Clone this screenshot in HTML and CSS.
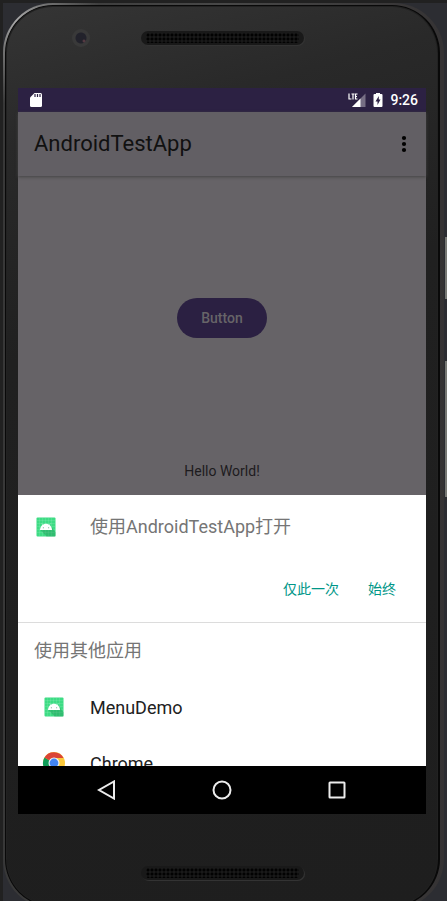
FILE: index.html
```html
<!DOCTYPE html>
<html lang="zh-CN">
<head>
<meta charset="utf-8">
<meta name="viewport" content="width=device-width">
<title>AndroidTestApp</title>
<link rel="stylesheet" href="styles.css">
</head>
<body>
<svg class="defs" width="0" height="0" aria-hidden="true">
  <symbol id="android" viewBox="0 0 20 20">
    <rect x="0.5" y="0.5" width="19" height="19" rx="1" fill="#3ddc84"/>
    <path d="M3.500 1v18M6.500 1v18M9.500 1v18M12.500 1v18M15.500 1v18M1 3.500h18M1 6.500h18M1 9.500h18M1 12.500h18M1 15.500h18" stroke="#fff" stroke-opacity=".18" stroke-width=".6"/>
    <path d="M4 12.500L10.500 19.500H19.500V15.500L14.500 8.500Z" fill="#1d8f52" fill-opacity=".4"/>
    <path d="M4 13C4.300 9 7 6.800 10 6.800S15.700 9 16 13Z" fill="#fff"/>
    <path d="M7 8.500L5.800 6.500M13 8.500L14.200 6.500" stroke="#fff" stroke-opacity=".7" stroke-width=".6"/>
    <circle cx="7.300" cy="10.700" r=".5" fill="#5b9477"/><circle cx="12.700" cy="10.700" r=".5" fill="#5b9477"/>
  </symbol>
</svg>
<div class="phone">
  <div class="body">
    <div class="forehead">
      <span class="camera"></span>
      <span class="speaker"></span>
    </div>
    <div class="screen">
      <div class="status">
        <svg width="14" height="16" viewBox="0 0 14 16"><path d="M5.500 1H11.500Q13 1 13 2.500V13.500Q13 15 11.500 15H2.500Q1 15 1 13.500V5.500Z" fill="#fff"/><path d="M6 2v3M8.500 2v3M11 2v3" stroke="#2c2143" stroke-width="1.200"/></svg>
        <span class="signals">
          <svg width="18" height="16" viewBox="0 0 18 16"><path d="M4 15L17.500 1.500V15Z" fill="#766e84"/><path d="M4 15L12.500 6.500V15Z" fill="#fff"/><path d="M1 1.500V7H3.500M3.500 2H6.500M5 2V7.500M9.500 2H7.500V7H9.500M7.500 4.500H9" fill="none" stroke="#fff" stroke-width="1.200"/></svg>
          <svg width="10" height="16" viewBox="0 0 10 16"><path d="M3 1H7V2H8.500Q9.500 2 9.500 3V14Q9.500 15 8.500 15H1.500Q.5 15 .5 14V3Q.5 2 1.500 2H3Z" fill="#fff"/><path d="M5.800 4L2.500 9.500H4.500V13L7.500 7.500H5.800Z" fill="#2c2143"/></svg>
          <span class="clock">9:26</span>
        </span>
      </div>
      <header class="appbar">
        <h1>AndroidTestApp</h1>
        <button class="more" aria-label="More options"><svg width="6" height="18" viewBox="0 0 6 18"><circle cx="3" cy="3" r="2.100"/><circle cx="3" cy="9" r="2.100"/><circle cx="3" cy="15" r="2.100"/></svg></button>
      </header>
      <main class="page">
        <button class="pill">Button</button>
        <p class="hello">Hello World!</p>
      </main>
      <section class="sheet">
        <div class="choice">
          <svg class="app" width="20" height="20"><use href="#android"/></svg>
          <h2>使用AndroidTestApp打开</h2>
        </div>
        <div class="actions">
          <button>仅此一次</button>
          <button>始终</button>
        </div>
        <div class="others">
          <h2>使用其他应用</h2>
          <button class="row"><span class="slot"><svg width="20" height="20"><use href="#android"/></svg></span>MenuDemo</button>
          <button class="row"><span class="slot"><svg width="24" height="24" viewBox="0 0 24 24"><circle cx="12" cy="12" r="11" fill="#fbc93b"/><path d="M12 12L2.470 6.500A11 11 0 0 0 12 23L17 14.500Z" fill="#0f9d58"/><path d="M12 12L2.470 6.500A11 11 0 0 1 21.530 7H12L7.500 14.500Z" fill="#db4437"/><circle cx="12" cy="12" r="5.500" fill="#f1f1f1"/><circle cx="12" cy="12" r="4.400" fill="#4285f4"/></svg></span>Chrome</button>
        </div>
      </section>
      <nav class="nav">
        <button aria-label="Back"><svg width="20" height="20" viewBox="0 0 20 20"><path d="M17 1.500V18.500L2 10Z"/></svg></button>
        <button aria-label="Home"><svg width="20" height="20" viewBox="0 0 20 20"><circle cx="10" cy="10" r="8.500"/></svg></button>
        <button aria-label="Overview"><svg width="20" height="20" viewBox="0 0 20 20"><rect x="2.500" y="2.500" width="15" height="15" rx=".5"/></svg></button>
      </nav>
    </div>
    <div class="chin"><span class="speaker"></span></div>
  </div>
</div>
<span class="side power"></span>
<span class="side volume"></span>
</body>
</html>
```
FILE: styles.css
```css
* { box-sizing: border-box; }
html, body { height: 100%; }
body {
  margin: 0;
  padding: 3px 3px 0;
  overflow: hidden;
  position: relative;
  background: linear-gradient(#212121 3px, transparent 3px), linear-gradient(90deg, #212121 3px, #2c2d32 3px);
  font-family: Roboto, "Noto Sans CJK SC", sans-serif;
}
.defs { position: absolute; }
h1, h2, p { margin: 0; font-weight: 400; }
button { border: 0; padding: 0; margin: 0; background: none; font: inherit; color: inherit; }
svg { display: block; flex: none; }

.phone {
  height: calc(100% + 8px);
  padding: 2px 4px 2px 2px;
  border-radius: 50px;
  background: radial-gradient(circle at 12px 16px, #aaa 0, #777 30px, transparent 85px), linear-gradient(90deg, #383838, #484848 50%, #353334);
}
.body {
  height: 100%;
  display: flex;
  flex-direction: column;
  padding: 0 12px;
  border: 1px solid #090909;
  border-right-width: 2px;
  border-radius: 48px;
  box-shadow: inset 0 0 0 1px #222;
  background: linear-gradient(165deg, #353535 0, #292929 14%, #202020 35%, #1e1e1e 100%);
}
.forehead { flex: none; height: 82px; position: relative; display: flex; justify-content: center; padding-top: 25px; }
.camera {
  position: absolute;
  left: 54px;
  top: 23px;
  width: 18px;
  height: 18px;
  border-radius: 50%;
  background: radial-gradient(circle at 12px 12px, #70474e 0, transparent 2px), radial-gradient(circle, #22222b 5px, #393939 6px);
}
.speaker {
  width: 163px;
  height: 14px;
  padding: 2px 5px;
  border-radius: 7px;
  background: radial-gradient(circle, #020202 1px, transparent 2px) 0 0 / 4px 4px content-box, #191919;
  box-shadow: 1px 1px 0 #333;
}
.chin { flex: none; height: 92px; display: flex; justify-content: center; padding-top: 52px; }

.screen { flex: 1; min-height: 0; display: flex; flex-direction: column; background: #666367; }
.status { flex: none; height: 24px; padding: 0 8px 0 11px; display: flex; align-items: center; justify-content: space-between; background: #2c2143; color: #fff; }
.signals { display: flex; align-items: center; gap: 7px; }
.clock { font-size: 14px; font-weight: 500; line-height: 24px; }
.appbar { flex: none; height: 64px; padding: 0 16px; display: flex; align-items: center; justify-content: space-between; background: #625f64; color: #111; box-shadow: 0 1px 3px #444; }
.appbar h1 { font-size: 22px; line-height: 28px; }
.more { padding: 0 3px; }
.page { flex: 1; min-height: 0; display: flex; flex-direction: column; align-items: center; justify-content: flex-end; padding-bottom: 14px; color: #1d1b1e; }
.pill { height: 40px; padding: 0 24px; border-radius: 20px; background: #2b2042; color: #676468; font-size: 14px; font-weight: 500; margin-bottom: 123px; }
.hello { font-size: 14px; line-height: 20px; }

.sheet { flex: none; background: #fff; color: #212121; }
.sheet h2 { font-size: 18px; line-height: 24px; color: #757575; }
.choice { display: flex; align-items: center; gap: 34px; height: 64px; padding: 0 18px; }
.actions { display: flex; justify-content: flex-end; align-items: flex-start; height: 63px; padding: 20px 30px; gap: 29px; color: #009688; font-size: 14px; line-height: 20px; }
.others { height: 144px; overflow: hidden; border-top: 1px solid #dcdcdc; }
.others h2 { padding: 16px; }
.row { display: flex; align-items: center; width: 100%; height: 56px; padding: 0 24px; gap: 36px; font-size: 18px; text-align: left; }
.slot { width: 24px; margin-right: -12px; display: flex; justify-content: center; }

.nav { flex: none; height: 48px; display: flex; align-items: center; justify-content: center; gap: 95px; background: #000; }
.nav svg { fill: none; stroke: #ececec; stroke-width: 2; }

.side { position: absolute; right: 0; width: 2px; background: #777874; }
.power { top: 237px; height: 62px; }
.volume { top: 361px; height: 136px; }
```
